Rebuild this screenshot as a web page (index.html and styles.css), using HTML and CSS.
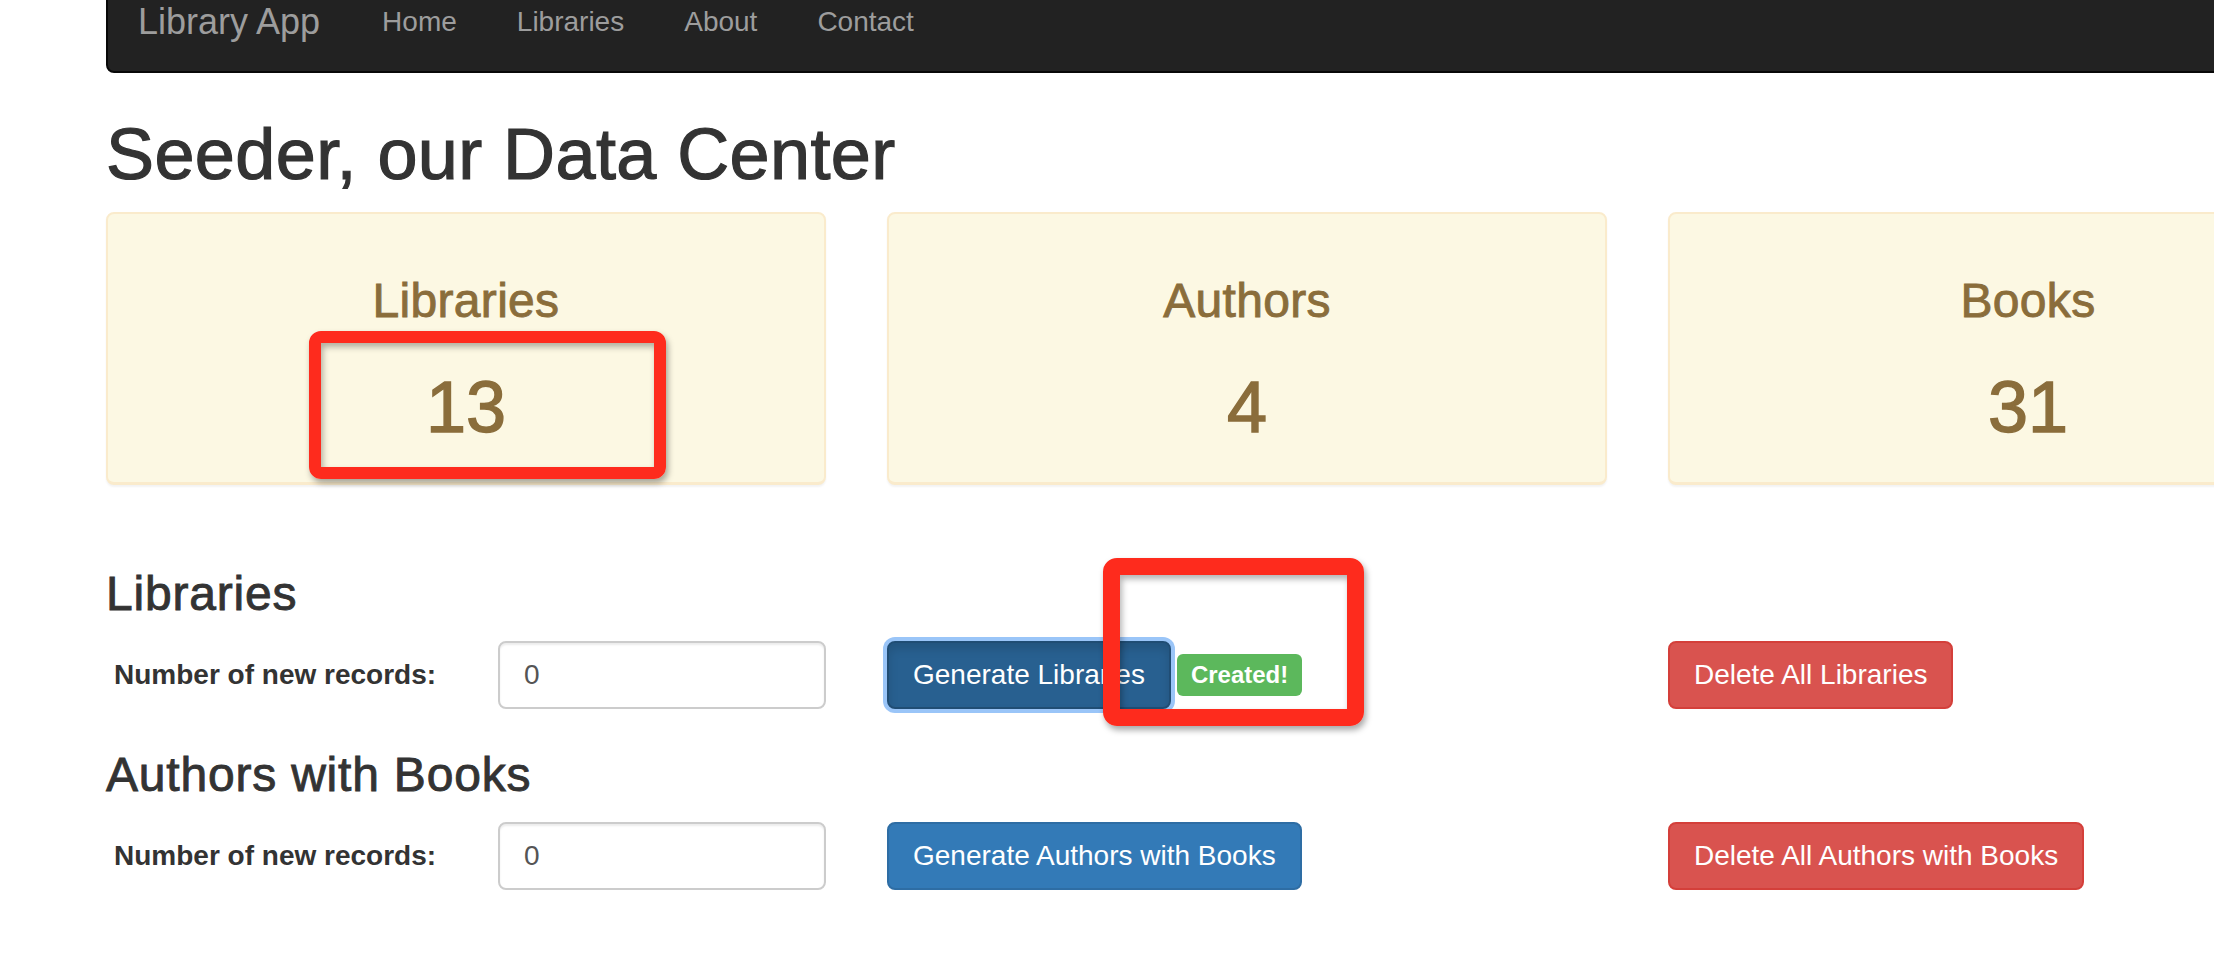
FILE: index.html
```html
<!DOCTYPE html>
<html lang="en">
<head>
<meta charset="utf-8">
<title>Library App - Seeder</title>
<link rel="stylesheet" href="styles.css">
</head>
<body>
<div class="page">
  <nav class="navbar">
    <a class="brand" href="#">Library App</a>
    <ul class="nav">
      <li><a href="#">Home</a></li>
      <li><a href="#">Libraries</a></li>
      <li><a href="#">About</a></li>
      <li><a href="#">Contact</a></li>
    </ul>
  </nav>

  <h1 class="title">Seeder, our Data Center</h1>

  <div class="stats">
    <div class="panel">
      <h3 class="panel-title">Libraries</h3>
      <div class="panel-count">13</div>
    </div>
    <div class="panel">
      <h3 class="panel-title">Authors</h3>
      <div class="panel-count">4</div>
    </div>
    <div class="panel">
      <h3 class="panel-title">Books</h3>
      <div class="panel-count">31</div>
    </div>
  </div>

  <h3 class="section">Libraries</h3>
  <div class="form-row">
    <div class="field">
      <label class="field-label">Number of new records:</label>
      <input class="field-input" type="text" value="0">
    </div>
    <div class="actions">
      <button class="btn btn-primary is-active">Generate Libraries</button>
      <span class="badge">Created!</span>
    </div>
    <div class="actions">
      <button class="btn btn-danger">Delete All Libraries</button>
    </div>
  </div>

  <h3 class="section section-second">Authors with Books</h3>
  <div class="form-row">
    <div class="field">
      <label class="field-label">Number of new records:</label>
      <input class="field-input" type="text" value="0">
    </div>
    <div class="actions">
      <button class="btn btn-primary">Generate Authors with Books</button>
    </div>
    <div class="actions">
      <button class="btn btn-danger">Delete All Authors with Books</button>
    </div>
  </div>
</div>

<div class="mark mark-count"></div>
<div class="mark mark-created"></div>
</body>
</html>
```

FILE: styles.css
```css
html, body {
  margin: 0;
  padding: 0;
  background: #fff;
}

body {
  display: flow-root;
  position: relative;
  width: 2214px;
  height: 962px;
  overflow: hidden;
  font-family: "Liberation Sans", Arial, sans-serif;
  color: #333;
}

.page {
  margin-top: -31px;
  margin-left: 106px;
  width: 2282px;
}

/* Navbar */
.navbar {
  display: flex;
  align-items: flex-start;
  height: 104px;
  box-sizing: border-box;
  background: #222;
  border: 2px solid #080808;
  border-radius: 8px;
  margin-bottom: 42px;
}

.brand {
  display: block;
  padding: 31px 30px 29px;
  font-size: 36px;
  line-height: 40px;
  color: #9d9d9d;
  text-decoration: none;
}

.nav {
  display: flex;
  list-style: none;
  margin: 0 0 0 2px;
  padding: 0;
}

.nav a {
  display: block;
  padding: 31px 30px 29px;
  font-size: 28px;
  line-height: 40px;
  color: #9d9d9d;
  text-decoration: none;
}

/* Title */
.title {
  margin: 0 0 18px;
  font-size: 72px;
  line-height: 1.1;
  font-weight: 500;
  letter-spacing: 0.4px;
  -webkit-text-stroke: 1.2px currentColor;
  color: #333;
}

/* Stats panels */
.stats {
  display: grid;
  grid-template-columns: 720px 720px 720px;
  column-gap: 61px;
}

.panel {
  box-sizing: border-box;
  height: 273px;
  padding: 61px 0 0;
  background: #fcf8e3;
  border: 2px solid #faebcc;
  border-bottom-width: 3px;
  border-radius: 8px;
  box-shadow: 0 2px 2px rgba(0, 0, 0, 0.05);
  text-align: center;
  color: #8a6d3b;
}

.panel-title {
  margin: 0 0 40px;
  font-size: 48px;
  line-height: 1.1;
  font-weight: 500;
  letter-spacing: 0.3px;
  -webkit-text-stroke: 0.9px currentColor;
}

.panel-count {
  font-size: 72px;
  line-height: 1.1;
  font-weight: 500;
  -webkit-text-stroke: 1.4px currentColor;
}

/* Sections */
.section {
  margin: 83px 0 20px;
  font-size: 48px;
  line-height: 1.1;
  font-weight: 500;
  letter-spacing: 0.8px;
  -webkit-text-stroke: 0.9px currentColor;
  color: #333;
}

.section-second {
  margin-top: 40px;
}

.form-row {
  display: grid;
  grid-template-columns: 720px 720px 720px;
  column-gap: 61px;
  align-items: center;
}

.field {
  display: flex;
  align-items: center;
  justify-content: space-between;
}

.field-label {
  padding-left: 8px;
  font-size: 28px;
  font-weight: bold;
  color: #333;
}

.field-input {
  box-sizing: border-box;
  width: 328px;
  height: 68px;
  padding: 12px 24px;
  font-family: "Liberation Sans", Arial, sans-serif;
  font-size: 28px;
  color: #555;
  background: #fff;
  border: 2px solid #ccc;
  border-radius: 8px;
  box-shadow: inset 0 2px 2px rgba(0, 0, 0, 0.075);
  outline: none;
}

.actions {
  display: flex;
  align-items: center;
  gap: 6px;
}

.btn {
  box-sizing: border-box;
  height: 68px;
  padding: 12px 24px;
  font-family: "Liberation Sans", Arial, sans-serif;
  font-size: 28px;
  line-height: 40px;
  color: #fff;
  border: 2px solid transparent;
  border-radius: 8px;
  white-space: nowrap;
  cursor: pointer;
}

.btn-primary {
  background: #337ab7;
  border-color: #2e6da4;
}

.btn-primary.is-active {
  background: #286090;
  border-color: #204d74;
  box-shadow: inset 0 6px 10px rgba(0, 0, 0, 0.125), 0 0 0 4px rgba(120, 178, 245, 0.75);
}

.btn-danger {
  background: #d9534f;
  border-color: #d43f3a;
}

.badge {
  display: inline-block;
  padding: 9px 14px 9px;
  font-size: 24px;
  line-height: 24px;
  font-weight: bold;
  color: #fff;
  background: #5cb85c;
  border-radius: 6px;
}

/* Red annotation marks laid over the screenshot */
.mark {
  position: absolute;
  box-sizing: border-box;
  border: 12px solid #fe2b1d;
  border-radius: 12px;
  box-shadow: 2px 4px 6px rgba(0, 0, 0, 0.35), inset 2px 4px 6px rgba(0, 0, 0, 0.3);
}

.mark-count {
  left: 309px;
  top: 331px;
  width: 357px;
  height: 148px;
}

.mark-created {
  left: 1103px;
  top: 558px;
  width: 261px;
  height: 168px;
  border-width: 17px;
  border-radius: 14px;
}
```
